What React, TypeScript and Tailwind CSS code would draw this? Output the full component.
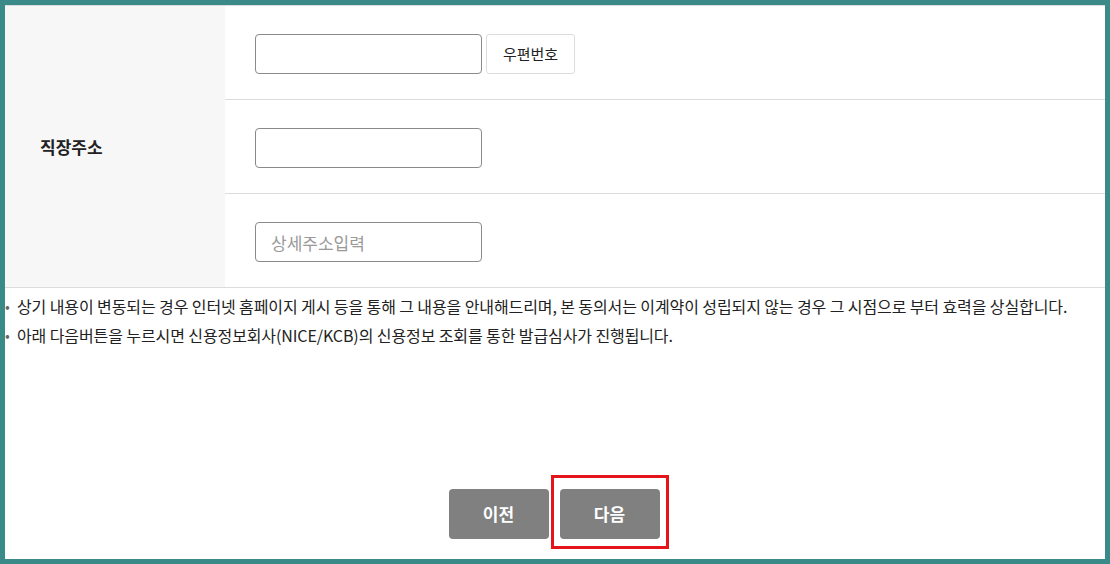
import { useState } from "react";

const font = { fontFamily: '"Noto Sans CJK KR", "Noto Sans", sans-serif' };

const notes = [
  "상기 내용이 변동되는 경우 인터넷 홈페이지 게시 등을 통해 그 내용을 안내해드리며, 본 동의서는 이계약이 성립되지 않는 경우 그 시점으로 부터 효력을 상실합니다.",
  "아래 다음버튼을 누르시면 신용정보회사(NICE/KCB)의 신용정보 조회를 통한 발급심사가 진행됩니다.",
];

const App = () => {
  const [zip, setZip] = useState<string>("");
  const [addr, setAddr] = useState<string>("");
  const [detail, setDetail] = useState<string>("");

  return (
    <div className="w-[1110px] h-[564px] bg-[#3a8a8a] p-[5px]" style={font}>
      <div className="h-full bg-white flex flex-col border-t border-[#dcdcdc]">
        <div className="grid grid-cols-[220px_1fr] border-b border-[#dcdcdc]">
          <div className="bg-[#f7f7f7] flex items-center pl-[35px]">
            <span className="text-[17px] font-bold text-[#222]">직장주소</span>
          </div>
          <div className="flex flex-col">
            <div className="h-[94px] border-b border-[#dcdcdc] pl-[30px] pt-[28px] flex gap-[4px]">
              <input
                className="w-[227px] h-[40px] border border-[#8a8a8a] rounded-[4px] px-[15px] text-[16px] outline-none"
                value={zip}
                onChange={(e) => setZip(e.target.value)}
              />
              <button className="w-[89px] h-[40px] border border-[#dddddd] rounded-[3px] bg-white text-[15px] text-[#222]">
                우편번호
              </button>
            </div>
            <div className="h-[94px] border-b border-[#dcdcdc] pl-[30px] pt-[28px]">
              <input
                className="w-[227px] h-[40px] border border-[#8a8a8a] rounded-[4px] px-[15px] text-[16px] outline-none"
                value={addr}
                onChange={(e) => setAddr(e.target.value)}
              />
            </div>
            <div className="h-[93px] pl-[30px] pt-[28px]">
              <input
                className="w-[227px] h-[40px] border border-[#8a8a8a] rounded-[4px] px-[15px] text-[17px] outline-none placeholder:text-[#999]"
                placeholder="상세주소입력"
                value={detail}
                onChange={(e) => setDetail(e.target.value)}
              />
            </div>
          </div>
        </div>

        <ul className="pt-[4px] text-[16px] tracking-[-0.1px] text-[#222]">
          {notes.map((n, i) => (
            <li key={i} className="flex leading-[29px]">
              <span className="w-[12px] shrink-0 text-[#666] text-[14px]">•</span>
              <span>{n}</span>
            </li>
          ))}
        </ul>

        <div className="mt-auto pb-[20px] pr-[2px] flex justify-center gap-[11px]">
          <button className="w-[100px] h-[50px] rounded-[4px] bg-[#808080] text-white text-[17px] font-bold">
            이전
          </button>
          <div className="relative">
            <button className="w-[100px] h-[50px] rounded-[4px] bg-[#808080] text-white text-[17px] font-bold">
              다음
            </button>
            <div className="absolute -top-[14px] -bottom-[10px] -left-[9px] -right-[9px] border-[3px] border-[#e3141c] pointer-events-none" />
          </div>
        </div>
      </div>
    </div>
  );
};

export default App;
